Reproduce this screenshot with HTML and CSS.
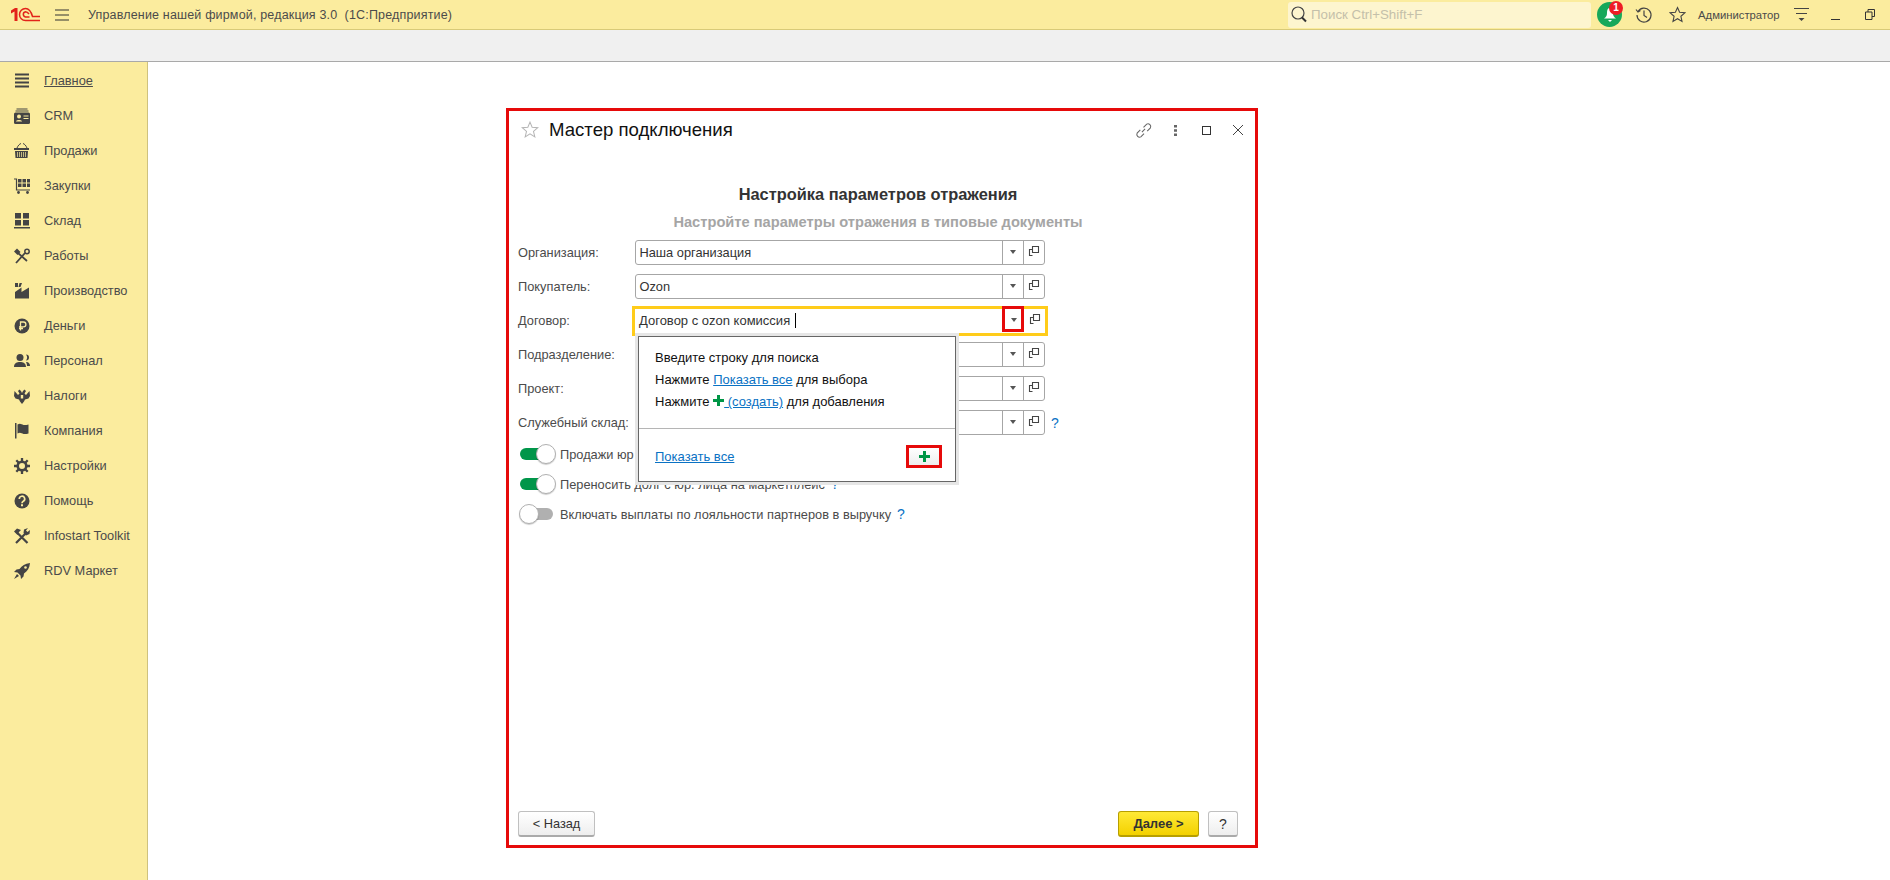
FILE: index.html
```html
<!DOCTYPE html>
<html lang="ru">
<head>
<meta charset="utf-8">
<title>Мастер подключения</title>
<link rel="stylesheet" href="styles.css">
</head>
<body>
<svg class="defs" width="0" height="0">
  <symbol id="i-copy" viewBox="0 0 12 12"><path d="M4.500 1.500h6v6h-6zM4 4.500H1.500v6h3" fill="none" stroke="#444" stroke-width="1.100"/></symbol>
  <symbol id="i-plus" viewBox="0 0 11 11"><path d="M4 0h3v4h4v3H7v4H4V7H0V4h4z" fill="#009646"/></symbol>
</svg>
<header class="topbar">
  <svg class="logo" width="30" height="15" viewBox="0 0 30 15"><path d="M0 3.500L4 1H6.500V14H3.500V4.500L0 6.500z" fill="#e2231a"/><path d="M29 13.500H14.500A6 6 0 0 1 14.500 1.500C18 1.500 20 4 21.500 9.500H29" fill="none" stroke="#e2231a" stroke-width="1.500"/><path d="M18.500 10H14.500A2.700 2.700 0 0 1 14.500 4.700C16 4.700 17 5.500 18 7" fill="none" stroke="#e2231a" stroke-width="1.500"/></svg>
  <svg class="burger" width="14" height="12" viewBox="0 0 14 12"><path d="M0 1h14M0 6h14M0 11h14" stroke="#333" stroke-width="1"/></svg>
  <span class="apptitle">Управление нашей фирмой, редакция 3.0&nbsp; (1С:Предприятие)</span>
  <div class="search">
    <svg width="16" height="17" viewBox="0 0 16 17"><circle cx="7" cy="7" r="6" fill="none" stroke="#444" stroke-width="1.200"/><path d="M11 11.500l4 4" stroke="#333" stroke-width="2"/></svg>
    <span>Поиск Ctrl+Shift+F</span>
  </div>
  <div class="bell">
    <svg width="14" height="16" viewBox="0 0 14 16"><path d="M7 1C4.500 1 4 3 4 6c0 3-1 4-3 5.500h12C11 10 10 9 10 6c0-3-.5-5-3-5zM5 13h4l-2 2z" fill="#fff"/></svg>
    <span class="badge">1</span>
  </div>
  <svg class="history" width="18" height="18" viewBox="0 0 18 18"><path d="M3 5.500A7 7 0 1 1 2 9M1 3.500l2 2.500 2.500-1.500M9 4.500V9.500l3 2" fill="none" stroke="#444" stroke-width="1.200"/></svg>
  <svg class="star" width="17" height="17" viewBox="0 0 17 17"><path d="M8.500 1.500l2.100 4.800 5.200.5-3.900 3.500 1.100 5.100-4.500-2.700-4.500 2.700 1.100-5.100L1.200 6.800l5.200-.5z" fill="none" stroke="#444" stroke-width="1.100"/></svg>
  <span class="user">Администратор</span>
  <svg class="usermenu" width="15" height="15" viewBox="0 0 15 15"><path d="M0 1.500h15M2 6.500h11" stroke="#444"/><path d="M4.500 11h6l-3 3z" fill="#444"/></svg>
  <span class="minimize"></span>
  <svg class="restore" width="10" height="11" viewBox="0 0 10 11"><path d="M3 3V.5h6.500v7H7M.5 3h6.500v7.500H.5z" fill="none" stroke="#333"/></svg>
</header>
<div class="toolbar"></div>
<div class="workspace">
  <nav class="sidebar">
    <a class="navitem"><svg width="16" height="16" viewBox="0 0 16 16"><path d="M1 1.500h14M1 5.500h14M1 9.500h14M1 13.500h14" stroke="#444" stroke-width="2"/></svg><span class="navlabel current">Главное</span></a>
    <a class="navitem"><svg width="16" height="16" viewBox="0 0 16 16"><path d="M2.500 .5h11v1h-11zM1.500 2.500h13v1h-13z" fill="#444"/><rect y="4.500" width="16" height="11.500" rx="1.500" fill="#444"/><circle cx="5" cy="8.500" r="2" fill="#fbec9e"/><path d="M2 13.500c0-2 6-2 6 0zM9.500 7.500h5v1h-5zM9.500 10h5v1h-5z" fill="#fbec9e"/></svg><span class="navlabel">CRM</span></a>
    <a class="navitem"><svg width="16" height="16" viewBox="0 0 16 16"><path d="M3 5C4 2.500 5.500 1 7 .5M13 5C12 2.500 10.500 1 9 .5" stroke="#444" fill="none"/><path d="M0 5h15v2H0zM1 8h13l-.5 7h-12z" fill="#444"/><path d="M3.500 9v5M5.500 9v5M7.500 9v5M9.500 9v5M11.500 9v5" stroke="#fbec9e" stroke-width=".7"/></svg><span class="navlabel">Продажи</span></a>
    <a class="navitem"><svg width="16" height="16" viewBox="0 0 16 16"><path d="M0 1h2.500v11H16" fill="none" stroke="#444" stroke-width="1.200"/><path d="M4 1h3.500v3.500H4zM8.500 1H12v3.500H8.500zM13 1h3v3.500h-3zM4 5.500h3.500V9H4zM8.500 5.500H12V9H8.500zM13 5.500h3V9h-3z" fill="#444"/><circle cx="4.500" cy="14.500" r="1.400" fill="#444"/><circle cx="13.500" cy="14.500" r="1.400" fill="#444"/></svg><span class="navlabel">Закупки</span></a>
    <a class="navitem"><svg width="16" height="16" viewBox="0 0 16 16"><path d="M1 0h6v5.500H1zM9 0h6v5.500H9zM1 7h6v5.500H1zM9 7h6v5.500H9zM0 14h16v1.500H0z" fill="#444"/></svg><span class="navlabel">Склад</span></a>
    <a class="navitem"><svg width="16" height="16" viewBox="0 0 16 16"><path d="M2 15L11 5M4 5l9 8" stroke="#444" stroke-width="1.800" fill="none"/><path d="M0 3.500L3 .5 6.500 4l-3 3z" fill="#444"/><circle cx="13" cy="3.500" r="2.200" fill="none" stroke="#444" stroke-width="1.500"/></svg><span class="navlabel">Работы</span></a>
    <a class="navitem"><svg width="16" height="16" viewBox="0 0 16 16"><path d="M1 0h3v4H1zM5.500 0H8L6.500 4H4.500zM1 15.500V9l6.500-4.500V9L15 4.500v11z" fill="#444"/></svg><span class="navlabel">Производство</span></a>
    <a class="navitem"><svg width="16" height="16" viewBox="0 0 16 16"><circle cx="8" cy="8" r="7.500" fill="#444"/><path d="M6.500 12.500V4H9.500a2.300 2.300 0 0 1 0 4.800H5M5 10.500h4" fill="none" stroke="#fbec9e" stroke-width="1.300"/></svg><span class="navlabel">Деньги</span></a>
    <a class="navitem"><svg width="16" height="16" viewBox="0 0 16 16"><circle cx="6" cy="4.500" r="3.500" fill="#444"/><path d="M0 14c0-4 3-5 6-5s6 1 6 5zM12 1.500a3 3 0 0 1 0 6 5 5 0 0 0 0-6zM13 9c2 .5 3 2 3 4h-3c0-2-.500-3-1-4z" fill="#444"/></svg><span class="navlabel">Персонал</span></a>
    <a class="navitem"><svg width="16" height="16" viewBox="0 0 16 16"><path d="M5.500 1.500L7 3l1 2 1-2 1.500-1.500L12 3l-1.500 2.500L12 7l3.500-4L16 8l-1.500 2.500-3.500 1-1 2L8 16l-2-2.500-1-2-3.500-1L0 8l.5-5L4 7l1.500-1.500L4 3z" fill="#444"/><path d="M6.800 7h2.400v3.500H6.800z" fill="#fbec9e"/></svg><span class="navlabel">Налоги</span></a>
    <a class="navitem"><svg width="16" height="16" viewBox="0 0 16 16"><path d="M1 0h1.500v15.500H1zM3.500 1.500c3-1.500 4 0 6 .5 1.500.300 3 0 5-.5v9c-2 .5-3.500.800-5 .5-2-.5-3-2-6-.5z" fill="#444"/></svg><span class="navlabel">Компания</span></a>
    <a class="navitem"><svg width="16" height="16" viewBox="0 0 16 16"><circle cx="8" cy="8" r="4.300" fill="none" stroke="#444" stroke-width="2.600"/><path d="M8 0v3M8 13v3M0 8h3M13 8h3M2.300 2.300l2.200 2.200M11.500 11.500l2.200 2.200M13.700 2.300l-2.200 2.200M4.500 11.500l-2.200 2.200" stroke="#444" stroke-width="2.300"/></svg><span class="navlabel">Настройки</span></a>
    <a class="navitem"><svg width="16" height="16" viewBox="0 0 16 16"><circle cx="8" cy="8" r="7.500" fill="#444"/><path d="M5.300 6a2.700 2.700 0 1 1 4 2.300C8.300 8.900 8 9.300 8 10.300" fill="none" stroke="#fbec9e" stroke-width="1.700"/><path d="M7 11.300h2v2H7z" fill="#fbec9e"/></svg><span class="navlabel">Помощь</span></a>
    <a class="navitem"><svg width="16" height="16" viewBox="0 0 16 16"><path d="M2 15L12 5M13.500 15L3.500 5" stroke="#444" stroke-width="2.200"/><path d="M0 3.500L3 .5 7 2l-2 2-1.500 3zM9.500 5l.5-3.500L14 0l-2 2.500 1.500 1.500L16 2l-.5 4-3.500 1.500z" fill="#444"/></svg><span class="navlabel">Infostart Toolkit</span></a>
    <a class="navitem"><svg width="16" height="16" viewBox="0 0 16 16"><path d="M16 0c-5 .5-8 2.500-10.500 6L2.500 6.500 0 9l3.500.5L6.500 12.500 7 16l2.500-2.500.5-3C13.500 8 15.500 5 16 0z" fill="#444"/><circle cx="11.500" cy="4.500" r="1.300" fill="#fbec9e"/><path d="M3 11l-3 5 5-3z" fill="#444"/></svg><span class="navlabel">RDV Маркет</span></a>
  </nav>
  <main class="canvas">
    <section class="window">
      <div class="winhead">
        <svg class="favstar" width="18" height="18" viewBox="0 0 16 16"><path d="M8 1l1.900 4.600 5 .4-3.800 3.200 1.200 4.900L8 11.500 3.700 14.100l1.200-4.900L1.100 6l5-.4z" fill="none" stroke="#b5b5b5" stroke-width=".9"/></svg>
        <h1 class="wintitle">Мастер подключения</h1>
        <svg class="link" width="17" height="17" viewBox="0 0 16 16"><path d="M6.500 9.500l3-3M5 7.500L2 10.500a2.600 2.600 0 0 0 3.500 3.500l3-3M8 5l3-3a2.600 2.600 0 0 1 3.500 3.500l-3 3" fill="none" stroke="#666"/></svg>
        <svg class="dots" width="3" height="11" viewBox="0 0 3 11"><path d="M0 0h3v2.500H0zM0 4.200h3v2.500H0zM0 8.400h3v2.500H0z" fill="#666"/></svg>
        <span class="maxbox"></span>
        <svg class="close" width="10" height="10" viewBox="0 0 10 10"><path d="M0 0l10 10M10 0L0 10" stroke="#444"/></svg>
      </div>
      <div class="winbody">
        <h2 class="heading">Настройка параметров отражения</h2>
        <h3 class="subheading">Настройте параметры отражения в типовые документы</h3>
        <div class="form">
          <div class="row"><label class="label">Организация:</label><div class="field"><span class="value">Наша организация</span><span class="fbtn"><i class="caret"></i></span><span class="fbtn"><svg class="copy" width="12" height="12"><use href="#i-copy"/></svg></span></div></div>
          <div class="row"><label class="label">Покупатель:</label><div class="field"><span class="value">Ozon</span><span class="fbtn"><i class="caret"></i></span><span class="fbtn"><svg class="copy" width="12" height="12"><use href="#i-copy"/></svg></span></div></div>
          <div class="row"><label class="label">Договор:</label><div class="field focus"><span class="value">Договор с ozon комиссия <i class="cursor"></i></span><span class="fbtn"><i class="caret"></i></span><span class="fbtn"><svg class="copy" width="12" height="12"><use href="#i-copy"/></svg></span></div>
            <span class="mark mark-caret"></span>
          </div>
          <div class="row"><label class="label">Подразделение:</label><div class="field"><span class="value"></span><span class="fbtn"><i class="caret"></i></span><span class="fbtn"><svg class="copy" width="12" height="12"><use href="#i-copy"/></svg></span></div></div>
          <div class="row"><label class="label">Проект:</label><div class="field"><span class="value"></span><span class="fbtn"><i class="caret"></i></span><span class="fbtn"><svg class="copy" width="12" height="12"><use href="#i-copy"/></svg></span></div></div>
          <div class="row"><label class="label">Служебный склад:</label><div class="field"><span class="value"></span><span class="fbtn"><i class="caret"></i></span><span class="fbtn"><svg class="copy" width="12" height="12"><use href="#i-copy"/></svg></span></div><span class="help">?</span></div>
          <div class="toggles">
            <div class="togglerow"><span class="toggle on"></span><span class="togglelabel">Продажи юр</span></div>
            <div class="togglerow"><span class="toggle on"></span><span class="togglelabel">Переносить долг с юр. лица на маркетплейс</span><span class="help">?</span></div>
            <div class="togglerow"><span class="toggle"></span><span class="togglelabel">Включать выплаты по лояльности партнеров в выручку</span><span class="help">?</span></div>
          </div>
          <div class="popup">
            <div class="popuptext">
              <p>Введите строку для поиска</p>
              <p>Нажмите <a class="plink">Показать все</a> для выбора</p>
              <p>Нажмите <svg class="plus-inline" width="11" height="11"><use href="#i-plus"/></svg><a class="plink">&nbsp;(создать)</a> для добавления</p>
            </div>
            <div class="popupfoot">
              <a class="plink">Показать все</a>
              <span class="addbtn"><svg width="11" height="11"><use href="#i-plus"/></svg></span>
            </div>
          </div>
        </div>
      </div>
      <div class="winfoot">
        <button class="btn back">&lt; Назад</button>
        <button class="btn next">Далее &gt;</button>
        <button class="btn qmark">?</button>
      </div>
    </section>
  </main>
</div>
</body>
</html>
```

FILE: styles.css
```css
* { box-sizing: border-box; }
html, body { height: 100%; }
body {
  margin: 0;
  display: flex;
  flex-direction: column;
  overflow: hidden;
  background: #fff;
  font-family: "Liberation Sans", Arial, sans-serif;
  font-size: 12.800px;
  color: #4b4b4b;
}
.defs { position: absolute; }

/* Top bar */
.topbar {
  flex: none;
  height: 30px;
  display: flex;
  align-items: center;
  background: #fbec9e;
  border-bottom: 1px solid #d8ca78;
}
.logo { margin-left: 11px; }
.burger { margin-left: 14px; }
.apptitle { margin-left: 19px; width: 1111px; font-size: 12.500px; letter-spacing: .17px; color: #4b4b4b; white-space: nowrap; }
.search {
  width: 303px;
  height: 26px;
  margin-left: 89px;
  padding-left: 3px;
  display: flex;
  align-items: center;
  gap: 4px;
  border-radius: 3px;
  background: #fdf5cf;
  color: #c4c0aa;
  font-size: 13.300px;
}
.bell {
  position: relative;
  width: 25px;
  height: 25px;
  margin-left: 6px;
  display: flex;
  align-items: center;
  justify-content: center;
  border-radius: 50%;
  background: #17a85a;
}
.badge {
  position: absolute;
  top: -1px;
  right: -1px;
  width: 14px;
  height: 14px;
  border-radius: 50%;
  background: #ee1c25;
  color: #fff;
  font-size: 10px;
  font-weight: bold;
  line-height: 14px;
  text-align: center;
}
.history { margin-left: 13px; }
.star { margin-left: 16px; }
.user { margin-left: 12px; font-size: 11.300px; color: #4b4b4b; white-space: nowrap; }
.usermenu { margin-left: 14px; }
.minimize { width: 9px; height: 1px; margin: 10px 0 0 22px; background: #333; }
.restore { margin-left: 25px; }

.toolbar {
  flex: none;
  height: 32px;
  background: #f0f0f0;
  border-bottom: 1px solid #a9a9a9;
}

.workspace { flex: 1; min-height: 0; display: flex; }

/* Sidebar */
.sidebar {
  flex: none;
  width: 148px;
  padding-top: 1px;
  background: #fbec9e;
  border-right: 1px solid #cfc27e;
}
.navitem {
  height: 35px;
  display: flex;
  align-items: center;
  padding-left: 14px;
  color: #4b4b4b;
  white-space: nowrap;
}
.navitem svg { flex: none; }
.navlabel { margin-left: 14px; }
.current { text-decoration: underline; }

/* Window */
.canvas { flex: 1; padding: 46px 0 0 358px; }
.window {
  width: 752px;
  height: 740px;
  display: flex;
  flex-direction: column;
  border: 3px solid #e60a0a;
  background: #fff;
}
.winhead {
  flex: none;
  height: 38px;
  display: flex;
  align-items: center;
  padding-left: 12px;
}
.wintitle {
  flex: 1;
  margin: 0 0 0 10px;
  font-size: 18.600px;
  font-weight: normal;
  color: #111;
}
.link { margin-right: 22px; }
.dots { margin-right: 25px; }
.maxbox { width: 9px; height: 9px; border: 1px solid #333; margin-right: 22px; }
.close { margin-right: 12px; }

.winbody { flex: 1; min-height: 0; padding: 34px 17px 0 9px; }
.heading, .subheading { margin: 0; text-align: center; font-weight: bold; line-height: 22px; }
.heading { font-size: 16.400px; color: #333; }
.subheading { margin-top: 6px; font-size: 14.650px; color: #a5a5a5; }

.form { position: relative; margin-top: 7px; }
.row {
  position: relative;
  height: 25px;
  margin-bottom: 9px;
  display: flex;
  align-items: center;
}
.label { flex: none; width: 117px; color: #4b4b4b; white-space: nowrap; }
.field {
  width: 410px;
  height: 25px;
  display: flex;
  border: 1px solid #a6a6a6;
  border-radius: 3px;
  background: #fff;
}
.value {
  flex: 1;
  padding-left: 3.500px;
  line-height: 23px;
  color: #333;
  white-space: nowrap;
}
.fbtn {
  flex: none;
  width: 21px;
  display: flex;
  align-items: center;
  justify-content: center;
  border-left: 1px solid #a6a6a6;
}
.copy { margin-top: -3px; }
.caret { width: 0; height: 0; margin-top: -2px; border: 3.500px solid transparent; border-top: 4px solid #555; border-bottom: 0; }
.focus { height: 24px; border: 0; border-radius: 0; outline: 3px solid #ffcc1a; }
.focus .fbtn { border-left-color: transparent; }
.focus .value { padding-left: 4px; line-height: 24px; font-size: 13px; }
.cursor { display: inline-block; width: 1px; height: 15px; margin-left: 1px; background: #000; vertical-align: -3px; }
.mark { position: absolute; pointer-events: none; }
.mark-caret { left: 484px; top: -2px; width: 22px; height: 26px; border: 3px solid #e60a0a; }
.help { margin-left: 6px; color: #0a72c4; font-size: 14px; line-height: 1; }

.toggles { margin-top: -5px; }
.togglerow { height: 30px; display: flex; align-items: center; }
.toggle {
  position: relative;
  flex: none;
  width: 33px;
  height: 12px;
  margin-left: 2px;
  border-radius: 6px;
  background: #b0b0b0;
}
.toggle::after {
  content: "";
  position: absolute;
  top: -4px;
  left: -1px;
  width: 18px;
  height: 18px;
  border-radius: 50%;
  background: #fff;
  border: 1px solid #b0b0b0;
  box-shadow: 0 1px 1px rgba(0,0,0,.2);
}
.toggle.on { background: #00964a; }
.toggle.on::after { left: 16px; }
.togglelabel { margin-left: 7px; color: #4b4b4b; white-space: nowrap; }

/* Popup */
.popup {
  position: absolute;
  left: 120px;
  top: 96px;
  width: 318px;
  height: 146px;
  display: flex;
  flex-direction: column;
  border: 1px solid #666;
  background: #fff;
  box-shadow: 0 0 0 3px #e6e6e6;
  color: #111;
  font-size: 13px;
}
.popuptext { flex: none; height: 92px; padding: 10px 0 0 16px; border-bottom: 1px solid #b5b5b5; }
.popuptext p { margin: 0; height: 22px; line-height: 22px; }
.plink { color: #0a72c4; text-decoration: underline; }
.plus-inline { vertical-align: 0; }
.popupfoot { flex: 1; display: flex; justify-content: space-between; align-items: center; padding: 2px 13px 0 16px; }
.addbtn {
  width: 36px;
  height: 23px;
  display: flex;
  align-items: center;
  justify-content: center;
  border: 3px solid #e60a0a;
  background: linear-gradient(#fff, #eee);
}

/* Footer */
.winfoot { flex: none; display: flex; padding: 0 17px 8px 9px; }
.btn {
  height: 26px;
  padding: 0;
  border: 1px solid #c0c0c0;
  border-bottom: 2px solid #aaa;
  border-radius: 3px;
  background: linear-gradient(#fff, #eee);
  font: 12.800px "Liberation Sans", Arial, sans-serif;
  color: #333;
}
.back { width: 77px; margin-right: auto; }
.next { width: 81px; margin-right: 9px; font-size: 13px; font-weight: bold; border-color: #b79f00; background: linear-gradient(#ffe936, #f3d100); }
.qmark { width: 30px; font-size: 14px; }
```
